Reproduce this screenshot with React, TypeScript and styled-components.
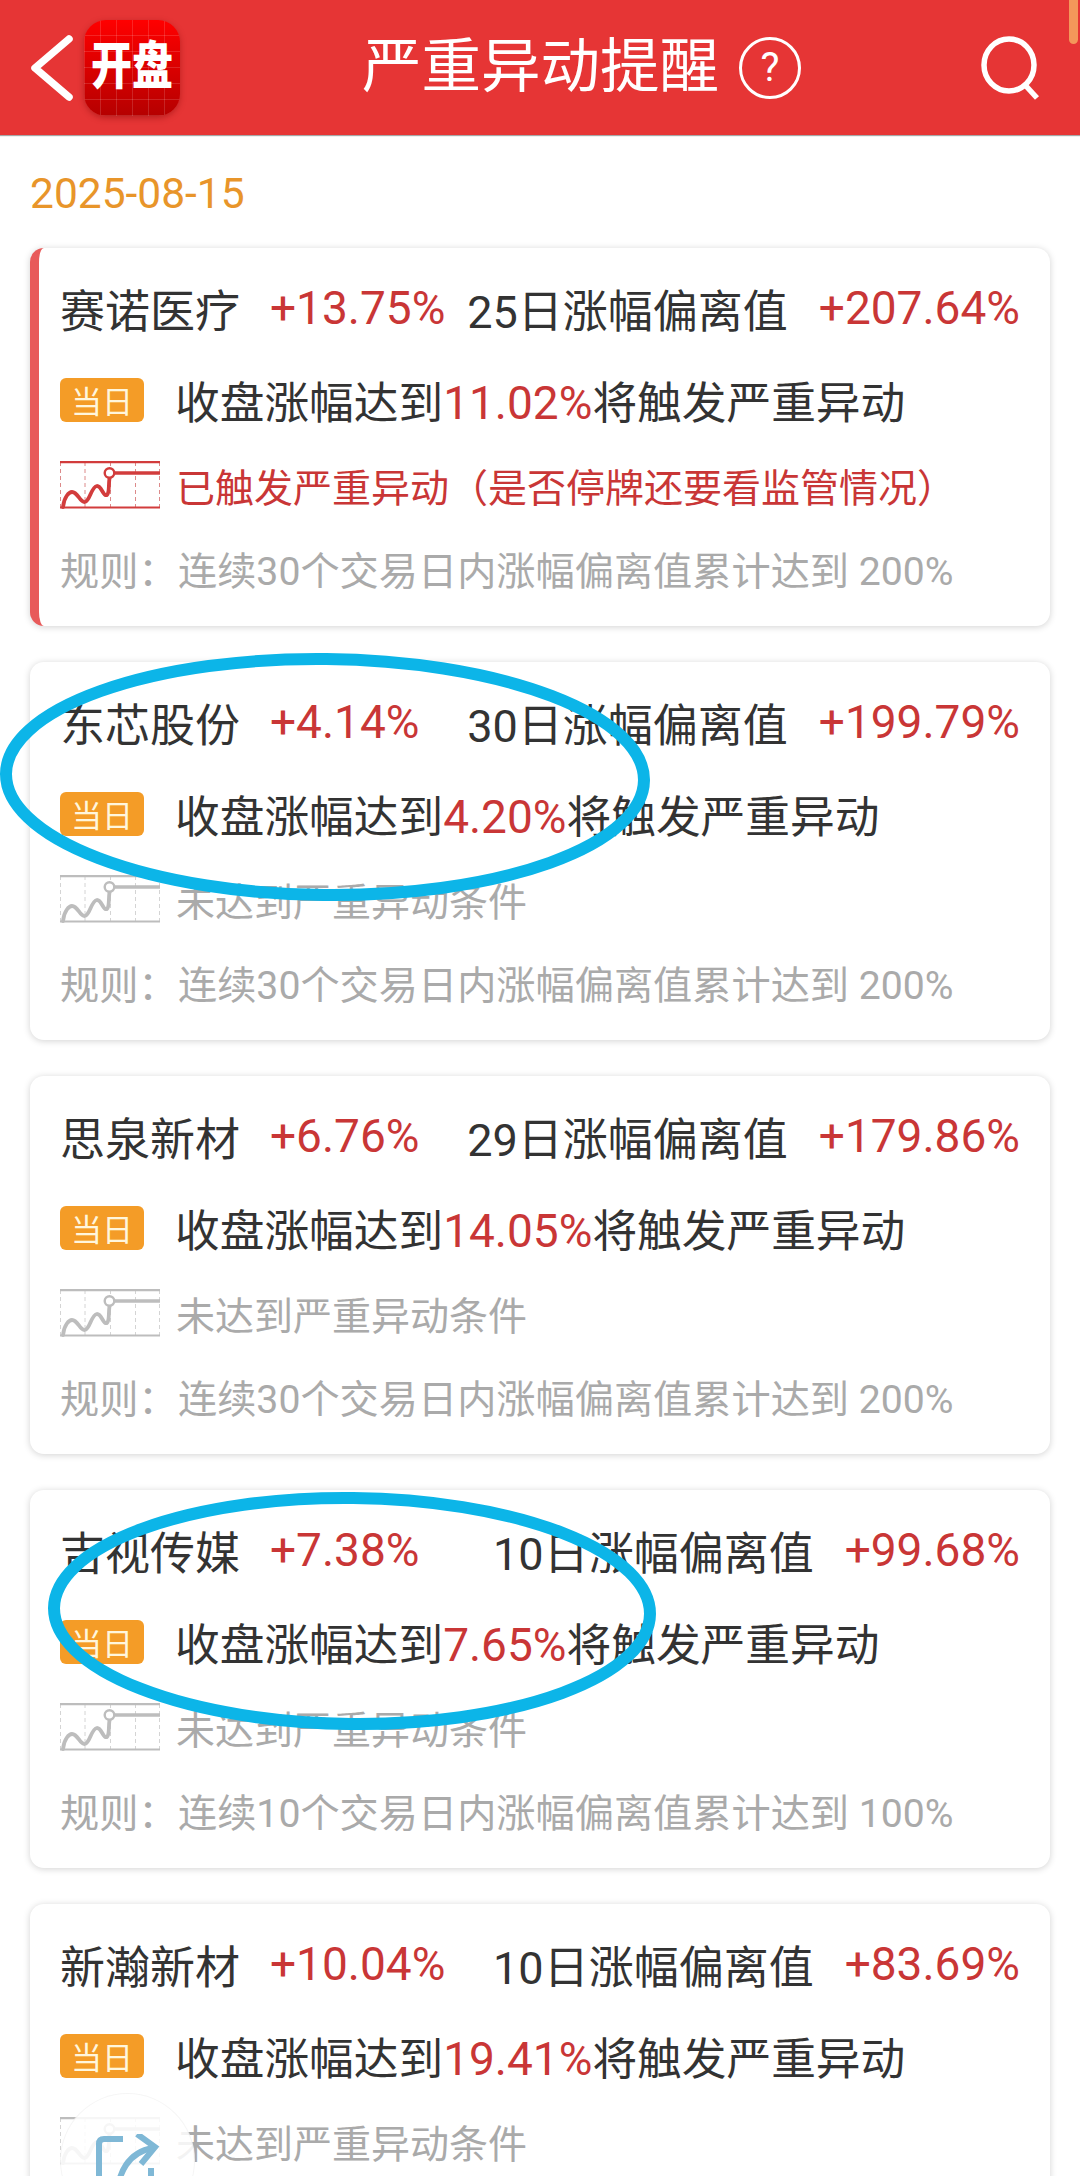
import React from "react";
import styled, { createGlobalStyle } from "styled-components";

const GlobalStyle = createGlobalStyle`
    html, body {
        margin: 0;
        padding: 0;
        background: #fff;
    }
`;

const Page = styled.div`
    position: relative;
    width: 1080px;
    height: 2176px;
    overflow: hidden;
    background: #fff;
    font-family: Roboto, "Noto Sans CJK SC", sans-serif;
`;

const Header = styled.header`
    display: flex;
    align-items: center;
    height: 135px;
    background: #e63535;
    color: #fff;
    box-shadow: 0 1px 1px rgba(0, 0, 0, 0.35);
`;

const LeftGroup = styled.div`
    display: flex;
    align-items: center;
    box-sizing: border-box;
    width: 362px;
    padding-left: 30px;
    gap: 10px;
`;

const Logo = styled.div`
    display: flex;
    align-items: center;
    justify-content: center;
    width: 96px;
    height: 96px;
    border-radius: 22px;
    background:
        repeating-linear-gradient(90deg, rgba(255, 255, 255, 0.14) 0 1px, transparent 1px 16px),
        repeating-linear-gradient(0deg, rgba(255, 255, 255, 0.14) 0 1px, transparent 1px 16px),
        linear-gradient(180deg, #ff0000, #b50000);
    box-shadow: 0 2px 6px rgba(120, 0, 0, 0.4);
`;

const LogoText = styled.span`
    font-size: 41px;
    font-weight: 900;
    line-height: 1;
    letter-spacing: 0;
    transform: scaleY(1.25);
    white-space: nowrap;
`;

const Title = styled.h1`
    margin: 0;
    font-size: 59.5px;
    font-weight: 400;
    line-height: 1;
    white-space: nowrap;
`;

const HelpMark = styled.span`
    display: flex;
    align-items: center;
    justify-content: center;
    box-sizing: border-box;
    width: 62px;
    height: 62px;
    margin-left: 20px;
    border: 3px solid #fff;
    border-radius: 50%;
    font-size: 40px;
    line-height: 1;
`;

const SearchIcon = styled.svg`
    width: 62px;
    height: 64px;
    margin-left: auto;
    margin-right: 38px;
`;

const Accent = styled.div`
    position: absolute;
    top: 0;
    right: 2px;
    width: 9px;
    height: 44px;
    border-radius: 0 0 5px 5px;
    background: #f4975a;
`;

const DateRow = styled.div`
    display: flex;
    align-items: center;
    box-sizing: border-box;
    height: 113px;
    padding: 3px 0 0 30px;
    font-size: 42.5px;
    color: #e8952a;
`;

const List = styled.div`
    display: flex;
    flex-direction: column;
    gap: 36px;
    padding: 0 30px;
`;

const Card = styled.section<{ $alert?: boolean }>`
    display: grid;
    grid-template-rows: 92px 91px 80px 85px;
    box-sizing: border-box;
    height: 378px;
    padding: 14px 30px 16px ${(p) => (p.$alert ? "21px" : "30px")};
    border-left: ${(p) => (p.$alert ? "9px solid #e85a5a" : "none")};
    border-radius: 14px;
    background: #fff;
    box-shadow: 0 1px 7px rgba(0, 0, 0, 0.18);
`;

const Row = styled.div`
    display: flex;
    align-items: center;
    white-space: nowrap;
`;

const Name = styled.span`
    width: 210px;
    font-size: 45px;
    color: #333;
`;

const Pct = styled.span`
    font-size: 46px;
    color: #c93636;
`;

const DevLabel = styled.span`
    margin-left: auto;
    font-size: 45px;
    color: #333;
`;

const DevValue = styled.span`
    margin-left: 31px;
    font-size: 46px;
    color: #c93636;
`;

const Badge = styled.span`
    display: flex;
    align-items: center;
    justify-content: center;
    width: 84px;
    height: 44px;
    border-radius: 6px;
    background: #f49c27;
    color: #fff6dc;
    font-size: 31px;
`;

const Trigger = styled.span`
    margin-left: 31px;
    font-size: 44.7px;
    color: #333;
`;

const Hot = styled.span`
    font-size: 46px;
    color: #c93636;
`;

const StatusIcon = styled.svg`
    flex: none;
    width: 100px;
    height: 48px;
`;

const Status = styled.span<{ $alert?: boolean }>`
    margin-left: 16px;
    font-size: 39px;
    color: ${(p) => (p.$alert ? "#c93636" : "#aaa")};
`;

const Rule = styled.div`
    display: flex;
    align-items: center;
    font-size: 39.2px;
    color: #aaa;
    white-space: nowrap;
`;

const RuleLabel = styled.span`
    width: 118px;
`;

const Marks = styled.svg`
    position: absolute;
    top: 0;
    left: 0;
    width: 1080px;
    height: 2176px;
    pointer-events: none;
`;

const ShareButton = styled.div`
    position: absolute;
    left: 60px;
    top: 2093px;
    display: flex;
    justify-content: center;
    box-sizing: border-box;
    width: 135px;
    height: 135px;
    padding-top: 40px;
    border: 1px solid rgba(0, 0, 0, 0.04);
    border-radius: 50%;
    background: rgba(255, 255, 255, 0.86);
`;

const ShareIcon = styled.svg`
    width: 66px;
    height: 66px;
`;

const ChartIcon: React.FC<{ color: string; faint: string }> = ({ color, faint }) => (
    <StatusIcon viewBox="0 0 100 48">
        <path d="M0.5 1V47M25 1V47M50.5 1V47M75.5 1V47M99.5 1V47" stroke={faint} strokeWidth="1" strokeDasharray="4 3" fill="none" />
        <path d="M0 1.2H100M0 46.5H100" stroke={color} strokeWidth="2.2" fill="none" />
        <path d="M3 46C4 36 9 31 12 31C18 31 20 42 25 41C30 40 31 26 37 25C42 25 43 36 47 34C50 31 48 22 50 15" stroke={color} strokeWidth="3.8" fill="none" strokeLinecap="round" />
        <path d="M55 12H100" stroke={color} strokeWidth="3.6" fill="none" />
        <circle cx="49.5" cy="12" r="4.8" stroke={color} strokeWidth="2.4" fill="#fff" />
    </StatusIcon>
);

interface StockData {
    name: string;
    pct: string;
    label: string;
    value: string;
    target: string;
    rule: string;
    triggered?: boolean;
}

const stocks: StockData[] = [
    { name: "赛诺医疗", pct: "+13.75%", label: "25日涨幅偏离值", value: "+207.64%", target: "11.02%", rule: "连续30个交易日内涨幅偏离值累计达到 200%", triggered: true },
    { name: "东芯股份", pct: "+4.14%", label: "30日涨幅偏离值", value: "+199.79%", target: "4.20%", rule: "连续30个交易日内涨幅偏离值累计达到 200%" },
    { name: "思泉新材", pct: "+6.76%", label: "29日涨幅偏离值", value: "+179.86%", target: "14.05%", rule: "连续30个交易日内涨幅偏离值累计达到 200%" },
    { name: "吉视传媒", pct: "+7.38%", label: "10日涨幅偏离值", value: "+99.68%", target: "7.65%", rule: "连续10个交易日内涨幅偏离值累计达到 100%" },
    { name: "新瀚新材", pct: "+10.04%", label: "10日涨幅偏离值", value: "+83.69%", target: "19.41%", rule: "连续10个交易日内涨幅偏离值累计达到 100%" },
];

const StockCard: React.FC<{ stock: StockData }> = ({ stock }) => (
    <Card $alert={stock.triggered}>
        <Row>
            <Name>{stock.name}</Name>
            <Pct>{stock.pct}</Pct>
            <DevLabel>{stock.label}</DevLabel>
            <DevValue>{stock.value}</DevValue>
        </Row>
        <Row>
            <Badge>当日</Badge>
            <Trigger>收盘涨幅达到<Hot>{stock.target}</Hot>将触发严重异动</Trigger>
        </Row>
        <Row>
            {stock.triggered
                ? <ChartIcon color="#d23c3c" faint="#dc8a8a" />
                : <ChartIcon color="#bdbdbd" faint="#d4d4d4" />}
            <Status $alert={stock.triggered}>
                {stock.triggered ? "已触发严重异动（是否停牌还要看监管情况）" : "未达到严重异动条件"}
            </Status>
        </Row>
        <Rule>
            <RuleLabel>规则：</RuleLabel>
            <span>{stock.rule}</span>
        </Rule>
    </Card>
);

const App: React.FC = () => {
    return <Page>
        <GlobalStyle />
        <Header>
            <LeftGroup>
                <svg width="44" height="66" viewBox="0 0 44 66">
                    <path d="M39 4L5 33L39 62" stroke="#fff" strokeWidth="7.5" fill="none" strokeLinecap="round" strokeLinejoin="round" />
                </svg>
                <Logo><LogoText>开盘</LogoText></Logo>
            </LeftGroup>
            <Title>严重异动提醒</Title>
            <HelpMark>?</HelpMark>
            <SearchIcon viewBox="0 0 62 64">
                <ellipse cx="29" cy="29" rx="25" ry="26" stroke="#fff" strokeWidth="5.5" fill="none" />
                <path d="M46 50L57 62" stroke="#fff" strokeWidth="5.5" fill="none" />
            </SearchIcon>
        </Header>
        <Accent />
        <DateRow>2025-08-15</DateRow>
        <List>
            {stocks.map((stock) => (
                <StockCard key={stock.name} stock={stock} />
            ))}
        </List>
        <Marks viewBox="0 0 1080 2176">
            <ellipse cx="325" cy="777" rx="319" ry="118" transform="rotate(0.6 325 777)" stroke="#0cb5e8" strokeWidth="12" fill="none" />
            <ellipse cx="352" cy="1611" rx="298" ry="113" transform="rotate(0.6 352 1611)" stroke="#0cb5e8" strokeWidth="12" fill="none" />
        </Marks>
        <ShareButton>
            <ShareIcon viewBox="0 0 66 66">
                <path d="M4 66V10Q4 5 9 5H28" stroke="#7fb8d6" strokeWidth="6" fill="none" />
                <path d="M22 66C22 38 34 18 58 14" stroke="#7fb8d6" strokeWidth="6" fill="none" />
                <path d="M42 0L60 13L46 30" stroke="#7fb8d6" strokeWidth="6" fill="none" />
                <path d="M56 34V66" stroke="#7fb8d6" strokeWidth="6" fill="none" />
            </ShareIcon>
        </ShareButton>
    </Page>;
};

export default App;
